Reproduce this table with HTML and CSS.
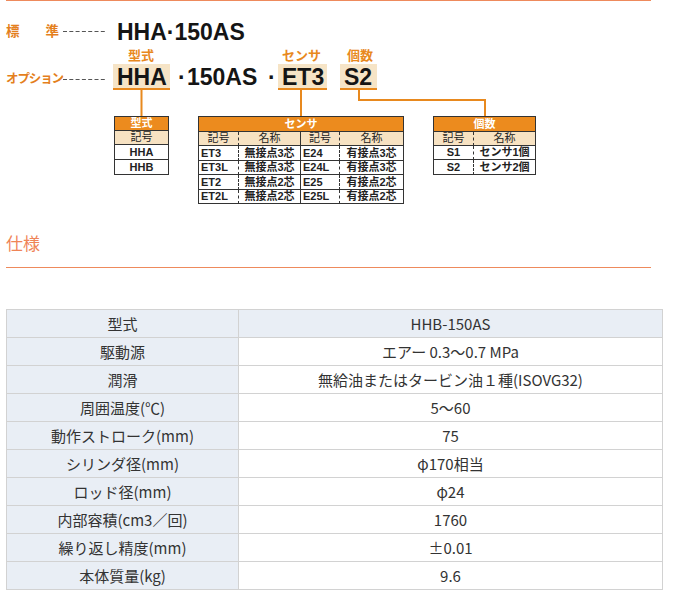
FILE: index.html
```html
<!DOCTYPE html>
<html lang="ja">
<head>
<meta charset="utf-8">
<title>仕様</title>
<link rel="stylesheet" href="styles.css">
</head>
<body>
<div class="page">
  <div class="topline"></div>
  <div class="diagram">
    <svg class="wires" width="660" height="210" viewBox="0 0 660 210">
      <line class="dash" x1="57" y1="30.5" x2="101" y2="30.5"/>
      <line class="dash" x1="57" y1="78.5" x2="101" y2="78.5"/>
      <path class="wire" d="M135.5 89V115M295 89V115M353 89V99H479V115"/>
    </svg>
    <div class="lbl lbl-std"><span>標</span><span>準</span></div>
    <div class="code code-std">HHA·150AS</div>
    <div class="lbl lbl-opt">オプション</div>
    <div class="tag tag-type">型式</div>
    <div class="tag tag-sensor">センサ</div>
    <div class="tag tag-qty">個数</div>
    <div class="code box box-type">HHA</div>
    <div class="code plain dot1">·</div>
    <div class="code plain mid">150AS</div>
    <div class="code plain dot2">·</div>
    <div class="code box box-sensor">ET3</div>
    <div class="code box box-qty">S2</div>

    <table class="mini mini-type">
      <colgroup><col class="c54"></colgroup>
      <tr class="r14"><th class="head">型式</th></tr>
      <tr class="sub r14"><td>記号</td></tr>
      <tr class="r15"><td>HHA</td></tr>
      <tr class="r15"><td>HHB</td></tr>
    </table>

    <table class="mini mini-sensor">
      <colgroup><col class="c40"><col class="c62"><col class="c39"><col class="c64"></colgroup>
      <tr class="r15"><th class="head" colspan="4">センサ</th></tr>
      <tr class="sub r14"><td class="dl">記号</td><td>名称</td><td class="dl">記号</td><td>名称</td></tr>
      <tr class="r15"><td class="dl left">ET3</td><td>無接点3芯</td><td class="dl left">E24</td><td>有接点3芯</td></tr>
      <tr class="r14"><td class="dl left">ET3L</td><td>無接点3芯</td><td class="dl left">E24L</td><td>有接点3芯</td></tr>
      <tr class="r15"><td class="dl left">ET2</td><td>無接点2芯</td><td class="dl left">E25</td><td>有接点2芯</td></tr>
      <tr class="r14"><td class="dl left">ET2L</td><td>無接点2芯</td><td class="dl left">E25L</td><td>有接点2芯</td></tr>
    </table>

    <table class="mini mini-qty">
      <colgroup><col class="c40"><col class="c62"></colgroup>
      <tr class="r15"><th class="head" colspan="2">個数</th></tr>
      <tr class="sub r14"><td class="dl">記号</td><td>名称</td></tr>
      <tr class="r14"><td class="dl">S1</td><td>センサ1個</td></tr>
      <tr class="r15"><td class="dl">S2</td><td>センサ2個</td></tr>
    </table>
  </div>

  <h2 class="section-title">仕様</h2>

  <table class="spec">
    <tr class="first"><th>型式</th><td>HHB-150AS</td></tr>
    <tr><th>駆動源</th><td>エアー 0.3～0.7 MPa</td></tr>
    <tr><th>潤滑</th><td>無給油またはタービン油１種(ISOVG32)</td></tr>
    <tr><th>周囲温度(℃)</th><td>5～60</td></tr>
    <tr><th>動作ストローク(mm)</th><td>75</td></tr>
    <tr><th>シリンダ径(mm)</th><td>φ170相当</td></tr>
    <tr><th>ロッド径(mm)</th><td>φ24</td></tr>
    <tr><th>内部容積(cm3／回)</th><td>1760</td></tr>
    <tr><th>繰り返し精度(mm)</th><td>±0.01</td></tr>
    <tr><th>本体質量(kg)</th><td>9.6</td></tr>
  </table>
</div>
</body>
</html>
```

FILE: styles.css
```css
html, body {
  margin: 0;
  padding: 0;
  background: #fff;
}

body {
  font-family: "Noto Sans CJK JP", "Noto Sans", sans-serif;
  color: #333;
}

.page {
  padding: 0 6px;
}

.topline {
  width: 645px;
  height: 1px;
  background: #ee8a5c;
}

/* ---------- model code diagram ---------- */
.diagram {
  position: relative;
  height: 210px;
}

.wires {
  position: absolute;
  left: 0;
  top: 0;
}

.dash {
  stroke: #555;
  stroke-width: 1;
  stroke-dasharray: 4 2.3;
}

.wire {
  fill: none;
  stroke: #e8891e;
  stroke-width: 2;
}

.lbl {
  position: absolute;
  left: 0;
  font-weight: bold;
  color: #e47f1d;
  line-height: 15px;
}

.lbl-std {
  top: 22px;
  width: 53px;
  display: flex;
  justify-content: space-between;
  font-size: 13.5px;
}

.lbl-opt {
  top: 69px;
  font-size: 12.5px;
  letter-spacing: -1.1px;
}

.tag {
  position: absolute;
  top: 46px;
  font-size: 13px;
  line-height: 15px;
  font-weight: bold;
  color: #e8891e;
}

.tag-type { left: 122px; }
.tag-sensor { left: 276px; }
.tag-qty { left: 341px; }

.code {
  position: absolute;
  font-family: "Liberation Sans", Arial, sans-serif;
  font-weight: bold;
  font-size: 23px;
  line-height: 24px;
  color: #151515;
}

.code-std {
  left: 111px;
  top: 19px;
}

.box {
  top: 63px;
  height: 26px;
  box-sizing: border-box;
  padding: 1px 3px 0 4px;
  background: #f6e4c6;
  border-bottom: 2px solid #e8891e;
}

.box-type { left: 107px; }
.box-sensor { left: 272px; }
.box-qty { left: 334px; padding-right: 5px; }

.plain { top: 64px; }
.dot1 { left: 172px; }
.mid { left: 181px; }
.dot2 { left: 262px; }

/* mini tables */
.mini {
  position: absolute;
  top: 115px;
  border-collapse: separate;
  border-spacing: 0;
  table-layout: fixed;
  border-top: 1px solid #333;
  border-left: 1px solid #333;
  background: #fff;
  font-family: "Liberation Sans", "Noto Sans CJK JP", sans-serif;
  font-weight: bold;
  font-size: 11px;
  line-height: 11px;
  color: #222;
}

.mini th,
.mini td {
  box-sizing: border-box;
  padding: 0;
  border-right: 1px solid #333;
  border-bottom: 1px solid #333;
  text-align: center;
  vertical-align: middle;
  white-space: nowrap;
  overflow: hidden;
}

.mini th.head {
  background: #ec8b1e;
  color: #fff;
}

.mini .sub td {
  background: #f7e2c2;
  font-weight: normal;
  color: #222;
}

.mini td.dl {
  border-right-style: dashed;
}

.mini td.left {
  text-align: left;
  padding-left: 2px;
}

.mini .r14 th, .mini .r14 td { height: 14px; }
.mini .r15 th, .mini .r15 td { height: 15px; }

.c54 { width: 54px; }
.c40 { width: 40px; }
.c62 { width: 62px; }
.c39 { width: 39px; }
.c64 { width: 64px; }

.mini-type { left: 108px; width: 55px; }
.mini-sensor { left: 192px; width: 206px; }
.mini-qty { left: 427px; width: 103px; }

/* ---------- spec section ---------- */
.section-title {
  width: 645px;
  margin: 20px 0 0;
  padding: 0 0 12px;
  font-size: 17px;
  line-height: 24px;
  font-weight: normal;
  color: #ef8457;
  border-bottom: 1px solid #ee8a5c;
}

.spec {
  width: 657px;
  margin-top: 41px;
  border-collapse: collapse;
  font-size: 15px;
  line-height: 18px;
  color: #333;
}

.spec th,
.spec td {
  height: 27px;
  padding: 0;
  border: 1px solid #d2d2d2;
  text-align: center;
  vertical-align: middle;
  font-weight: normal;
}

.spec th {
  width: 231px;
  background: #e9eef5;
}

.spec .first td {
  background: #e9eef5;
}
```
